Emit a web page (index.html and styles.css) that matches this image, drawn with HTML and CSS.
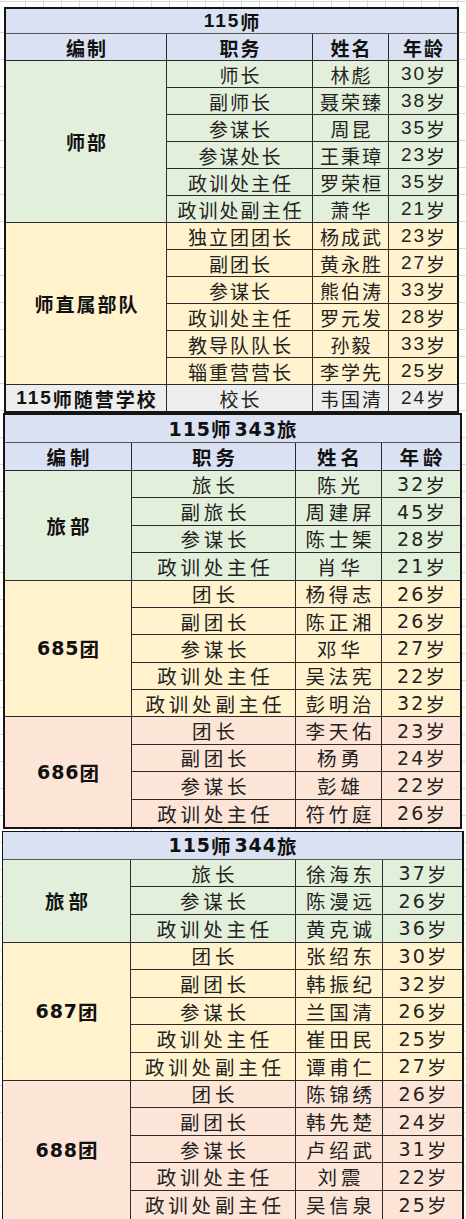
FILE: index.html
```html
<!DOCTYPE html>
<html lang="zh-CN">
<head>
<meta charset="utf-8">
<title>115师编制</title>
<link rel="stylesheet" href="styles.css">
</head>
<body>
<div class="sheet">
  <div class="tbl t1">
    <div class="c title"><span class="n">115</span>师</div>
    <div class="c hd">编制</div><div class="c hd">职务</div><div class="c hd">姓名</div><div class="c hd">年龄</div>

    <div class="c unit green s6">师部</div>
    <div class="c green">师长</div><div class="c green">林彪</div><div class="c green last"><span class="n">30</span>岁</div>
    <div class="c green">副师长</div><div class="c green">聂荣臻</div><div class="c green last"><span class="n">38</span>岁</div>
    <div class="c green">参谋长</div><div class="c green">周昆</div><div class="c green last"><span class="n">35</span>岁</div>
    <div class="c green">参谋处长</div><div class="c green">王秉璋</div><div class="c green last"><span class="n">23</span>岁</div>
    <div class="c green">政训处主任</div><div class="c green">罗荣桓</div><div class="c green last"><span class="n">35</span>岁</div>
    <div class="c green">政训处副主任</div><div class="c green">萧华</div><div class="c green last"><span class="n">21</span>岁</div>

    <div class="c unit yellow s6">师直属部队</div>
    <div class="c yellow">独立团团长</div><div class="c yellow">杨成武</div><div class="c yellow last"><span class="n">23</span>岁</div>
    <div class="c yellow">副团长</div><div class="c yellow">黄永胜</div><div class="c yellow last"><span class="n">27</span>岁</div>
    <div class="c yellow">参谋长</div><div class="c yellow">熊伯涛</div><div class="c yellow last"><span class="n">33</span>岁</div>
    <div class="c yellow">政训处主任</div><div class="c yellow">罗元发</div><div class="c yellow last"><span class="n">28</span>岁</div>
    <div class="c yellow">教导队队长</div><div class="c yellow">孙毅</div><div class="c yellow last"><span class="n">33</span>岁</div>
    <div class="c yellow">辎重营营长</div><div class="c yellow">李学先</div><div class="c yellow last"><span class="n">25</span>岁</div>

    <div class="c unit grey bot"><span class="n">115</span>师随营学校</div>
    <div class="c grey bot">校长</div><div class="c grey bot">韦国清</div><div class="c grey bot last"><span class="n">24</span>岁</div>
  </div>

  <div class="tbl t2">
    <div class="c title"><span class="n">115</span>师<span class="n">343</span>旅</div>
    <div class="c hd">编制</div><div class="c hd">职务</div><div class="c hd">姓名</div><div class="c hd">年龄</div>

    <div class="c unit green s4">旅部</div>
    <div class="c green">旅长</div><div class="c green">陈光</div><div class="c green last"><span class="n">32</span>岁</div>
    <div class="c green">副旅长</div><div class="c green">周建屏</div><div class="c green last"><span class="n">45</span>岁</div>
    <div class="c green">参谋长</div><div class="c green">陈士榘</div><div class="c green last"><span class="n">28</span>岁</div>
    <div class="c green">政训处主任</div><div class="c green">肖华</div><div class="c green last"><span class="n">21</span>岁</div>

    <div class="c unit yellow s5"><span class="n">685</span>团</div>
    <div class="c yellow">团长</div><div class="c yellow">杨得志</div><div class="c yellow last"><span class="n">26</span>岁</div>
    <div class="c yellow">副团长</div><div class="c yellow">陈正湘</div><div class="c yellow last"><span class="n">26</span>岁</div>
    <div class="c yellow">参谋长</div><div class="c yellow">邓华</div><div class="c yellow last"><span class="n">27</span>岁</div>
    <div class="c yellow">政训处主任</div><div class="c yellow">吴法宪</div><div class="c yellow last"><span class="n">22</span>岁</div>
    <div class="c yellow">政训处副主任</div><div class="c yellow">彭明治</div><div class="c yellow last"><span class="n">32</span>岁</div>

    <div class="c unit pink s4 bot"><span class="n">686</span>团</div>
    <div class="c pink">团长</div><div class="c pink">李天佑</div><div class="c pink last"><span class="n">23</span>岁</div>
    <div class="c pink">副团长</div><div class="c pink">杨勇</div><div class="c pink last"><span class="n">24</span>岁</div>
    <div class="c pink">参谋长</div><div class="c pink">彭雄</div><div class="c pink last"><span class="n">22</span>岁</div>
    <div class="c pink bot">政训处主任</div><div class="c pink bot">符竹庭</div><div class="c pink bot last"><span class="n">26</span>岁</div>
  </div>

  <div class="tbl t3">
    <div class="c title"><span class="n">115</span>师<span class="n">344</span>旅</div>

    <div class="c unit green s3">旅部</div>
    <div class="c green">旅长</div><div class="c green">徐海东</div><div class="c green last"><span class="n">37</span>岁</div>
    <div class="c green">参谋长</div><div class="c green">陈漫远</div><div class="c green last"><span class="n">26</span>岁</div>
    <div class="c green">政训处主任</div><div class="c green">黄克诚</div><div class="c green last"><span class="n">36</span>岁</div>

    <div class="c unit yellow s5"><span class="n">687</span>团</div>
    <div class="c yellow">团长</div><div class="c yellow">张绍东</div><div class="c yellow last"><span class="n">30</span>岁</div>
    <div class="c yellow">副团长</div><div class="c yellow">韩振纪</div><div class="c yellow last"><span class="n">32</span>岁</div>
    <div class="c yellow">参谋长</div><div class="c yellow">兰国清</div><div class="c yellow last"><span class="n">26</span>岁</div>
    <div class="c yellow">政训处主任</div><div class="c yellow">崔田民</div><div class="c yellow last"><span class="n">25</span>岁</div>
    <div class="c yellow">政训处副主任</div><div class="c yellow">谭甫仁</div><div class="c yellow last"><span class="n">27</span>岁</div>

    <div class="c unit pink s5 bot"><span class="n">688</span>团</div>
    <div class="c pink">团长</div><div class="c pink">陈锦绣</div><div class="c pink last"><span class="n">26</span>岁</div>
    <div class="c pink">副团长</div><div class="c pink">韩先楚</div><div class="c pink last"><span class="n">24</span>岁</div>
    <div class="c pink">参谋长</div><div class="c pink">卢绍武</div><div class="c pink last"><span class="n">31</span>岁</div>
    <div class="c pink">政训处主任</div><div class="c pink">刘震</div><div class="c pink last"><span class="n">22</span>岁</div>
    <div class="c pink bot">政训处副主任</div><div class="c pink bot">吴信泉</div><div class="c pink bot last"><span class="n">25</span>岁</div>
  </div>
</div>
</body>
</html>
```

FILE: styles.css
```css
html, body {
  margin: 0;
  padding: 0;
}

body {
  width: 466px;
  height: 1219px;
  overflow: hidden;
  background-color: #ffffff;
  background-image:
    repeating-linear-gradient(to right, transparent 0, transparent 17px, #d9d9d9 17px, #d9d9d9 18px),
    repeating-linear-gradient(to bottom, transparent 0, transparent 26px, #d9d9d9 26px, #d9d9d9 27px);
  background-position: 8px 0, 0 6px;
  font-family: "Liberation Sans", "Noto Sans CJK SC", sans-serif;
}

.sheet {
  display: flex;
  flex-direction: column;
  align-items: flex-start;
  padding-top: 7px;
}

.tbl {
  display: grid;
  box-sizing: border-box;
  border: 2px solid #151515;
  --fs: 19px;
  --ls: 2px;
}

.t1 {
  margin-left: 4px;
  grid-template-columns: 161px 146px 76px 68px;
  grid-template-rows: 25px 27px repeat(12, 27px) 26px;
}

.t2 {
  margin-left: 3px;
  grid-template-columns: 127px 164px 86px 78px;
  grid-template-rows: 28px 28px repeat(13, 27.38px);
  --fs: 19.5px;
  --ls: 3.8px;
}

.t3 {
  margin-top: 2px;
  margin-left: 2px;
  border-left-width: 1px;
  border-top-width: 1px;
  grid-template-columns: 128px 165px 87px 79px;
  grid-template-rows: 28px repeat(13, 27.6px);
  --fs: 19.5px;
  --ls: 3.8px;
}

.c {
  box-sizing: border-box;
  display: flex;
  align-items: center;
  justify-content: center;
  padding-left: var(--ls);
  border-right: 1px solid #2b2b2b;
  border-bottom: 1px solid #2b2b2b;
  font-size: var(--fs);
  letter-spacing: var(--ls);
  color: #222222;
  white-space: nowrap;
  overflow: hidden;
}

.t2 .n,
.t3 .n {
  font-family: "DejaVu Sans", sans-serif;
  font-size: 19px;
  letter-spacing: 2.2px;
}

.t2 .title .n,
.t3 .title .n,
.t2 .unit .n,
.t3 .unit .n {
  letter-spacing: 1px;
}

.c.last {
  border-right: none;
}

.c.bot {
  border-bottom: none;
}

.title {
  grid-column: 1 / span 4;
  border-right: none;
  border-bottom-color: #555555;
  background: #d9e1f2;
  font-weight: 700;
  color: #111111;
}

.hd {
  background: #d9e1f2;
  font-weight: 700;
  color: #111111;
}

.hd:nth-child(5) {
  border-right: none;
}

.unit {
  font-weight: 700;
  color: #111111;
}

.s3 { grid-row: span 3; }
.s4 { grid-row: span 4; }
.s5 { grid-row: span 5; }
.s6 { grid-row: span 6; }

.green { background: #e2efda; }
.yellow { background: #fff2cc; }
.pink { background: #fce4d6; }
.grey { background: #ededed; }
```
